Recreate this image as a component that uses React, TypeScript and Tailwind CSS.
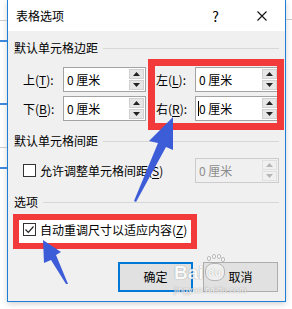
import React from "react";

const font = { fontFamily: '"Noto Sans CJK SC", "Noto Sans", sans-serif' };

function Tri({ up, color }: { up: boolean; color: string }) {
  return (
    <svg width="7" height="4" viewBox="0 0 7 4">
      {up ? <polygon points="0,4 7,4 3.5,0" fill={color} /> : <polygon points="0,0 7,0 3.5,4" fill={color} />}
    </svg>
  );
}

function Spin({ disabled }: { disabled?: boolean }) {
  const c = disabled ? "#b5b5b5" : "#222";
  return (
    <div className="flex flex-col w-[15px] py-px mr-px gap-px">
      <div className={`flex-1 flex items-center justify-center border ${disabled ? "border-[#e0e0e0] bg-[#f0f0f0]" : "border-[#d0d0d0] bg-[#e6e6e6]"}`}>
        <Tri up color={c} />
      </div>
      <div className={`flex-1 flex items-center justify-center border ${disabled ? "border-[#e0e0e0] bg-[#f0f0f0]" : "border-[#d0d0d0] bg-[#e6e6e6]"}`}>
        <Tri up={false} color={c} />
      </div>
    </div>
  );
}

function Field({ w, caret, disabled }: { w: string; caret?: boolean; disabled?: boolean }) {
  return (
    <div
      className={`${w} h-[25px] flex border ${disabled ? "border-[#cccccc] bg-[#f0f0f0] text-[#8d8d8d]" : "border-[#a3a3a3] bg-white text-black"}`}
    >
      <div className="flex-1 flex items-center pl-[3px] relative text-[12px] leading-none">
        {caret && <div className="absolute left-[2px] top-[4px] w-px h-[15px] bg-black" />}
        0 厘米
      </div>
      <Spin disabled={disabled} />
    </div>
  );
}

function Header({ text }: { text: string }) {
  return (
    <div className="flex items-center h-[16px] text-[12px] leading-none text-black">
      <span>{text}</span>
      <div className="flex-1 h-px bg-[#d7d7d7] ml-[5px]" />
    </div>
  );
}

function Label({ c, k, w }: { c: string; k: string; w: string }) {
  return (
    <div className={`${w} text-[12px] leading-none flex items-center`}>
      {c}(<span className="underline underline-offset-2">{k}</span>):
    </div>
  );
}

export default function App() {
  return (
    <div className="w-[292px] h-[309px] bg-white relative overflow-hidden" style={font}>
      {/* background of underlying window */}
      <div className="absolute left-0 top-[20px] w-[7px] h-px bg-[#c9c9c9]" />
      <div className="absolute left-0 top-[40px] w-[7px] h-[2px] bg-[#3c87d8]" />
      <div className="absolute left-0 top-[103px] w-[7px] h-[2px] bg-[#3c87d8]" />
      <div className="absolute left-0 top-[147px] w-[7px] h-px bg-[#c9c9c9]" />
      <div className="absolute left-0 top-[167px] w-[7px] h-[2px] bg-[#3c87d8]" />
      <div className="absolute right-0 top-[19px] w-[6px] h-px bg-[#c9c9c9]" />

      <div className="ml-[7px] w-[279px] h-[302px] border-x border-b border-[#1b7fd6] bg-[#f0f0f0] flex flex-col shadow-[0_2px_6px_rgba(0,0,0,0.18)]">
        {/* title bar */}
        <div className="h-[31px] bg-white flex items-center pl-[8px] text-[12px] text-black">
          <span>表格选项</span>
          <span className="ml-auto mr-[38px] text-[14px] leading-none">?</span>
          <svg width="10" height="10" viewBox="0 0 10 10" className="mr-[18px]">
            <path d="M0.5 0.5 L9.5 9.5 M9.5 0.5 L0.5 9.5" stroke="#111" strokeWidth="1.1" />
          </svg>
        </div>

        <div className="flex-1 flex flex-col px-[6px]">
          <div className="mt-[9px]">
            <Header text="默认单元格边距" />
          </div>
          <div className="mt-[11px] flex flex-col gap-[4px]">
            <div className="flex items-center pl-[9px]">
              <Label c="上" k="T" w="w-[40px]" />
              <Field w="w-[83px]" />
              <div className="w-[10px]" />
              <Label c="左" k="L" w="w-[39px]" />
              <Field w="w-[84px]" />
            </div>
            <div className="flex items-center pl-[9px]">
              <Label c="下" k="B" w="w-[40px]" />
              <Field w="w-[83px]" />
              <div className="w-[10px]" />
              <Label c="右" k="R" w="w-[39px]" />
              <Field w="w-[84px]" caret />
            </div>
          </div>

          <div className="mt-[12px]">
            <Header text="默认单元格间距" />
          </div>
          <div className="mt-[9px] flex items-center pl-[9px]">
            <div className="w-[13px] h-[13px] border border-[#333] bg-white" />
            <span className="ml-[4px] text-[12px] leading-none">
              允许调整单元格间距(<span className="underline underline-offset-2">S</span>)
            </span>
            <div className="ml-auto">
              <Field w="w-[84px]" disabled />
            </div>
          </div>

          <div className="mt-[11px]">
            <Header text="选项" />
          </div>
          <div className="mt-[4px] -ml-px">
            <div className="w-[184px] h-[35px] border-[6px] border-[#f23a3a] bg-white flex items-center pl-[4px] pb-[4px]">
              <div className="w-[13px] h-[13px] border border-[#333] bg-white flex items-center justify-center">
                <svg width="11" height="11" viewBox="0 0 11 11">
                  <path d="M1.5 5.5 L4.3 8.3 L9.5 2.5" stroke="#222" strokeWidth="1.2" fill="none" />
                </svg>
              </div>
              <span className="ml-[4px] text-[12px] leading-none whitespace-nowrap">
                自动重调尺寸以适应内容(<span className="underline underline-offset-2">Z</span>)
              </span>
            </div>
          </div>

          <div className="mt-[13px] flex justify-end gap-[10px] mr-px">
            <div className="w-[75px] h-[30px] border-2 border-[#0078d7] bg-[#e1e1e1] flex items-center justify-center text-[12px]">
              确定
            </div>
            <div className="w-[75px] h-[30px] border border-[#adadad] bg-[#e1e1e1] flex items-center justify-center text-[12px]">
              取消
            </div>
          </div>
        </div>
      </div>

      {/* red annotation box */}
      <div className="absolute left-[148px] top-[59px] w-[136px] h-[71px] border-[7px] border-[#f23a3a]" />

      {/* watermark */}
      <div className="absolute left-[174px] top-[254px] opacity-80 pointer-events-none">
        <div className="flex items-end">
          <span className="text-[19px] font-bold leading-none text-white [text-shadow:0_0_1px_#9a9a9a,0_0_1px_#9a9a9a]" style={{ fontFamily: '"Liberation Sans", sans-serif' }}>
            Bai
          </span>
          <div className="relative w-[20px] h-[28px] ml-[1px]">
            <div className="absolute left-[2px] top-[2px] w-[4px] h-[5px] rounded-full bg-white border border-[#aaa]" />
            <div className="absolute left-[7px] top-0 w-[4px] h-[5px] rounded-full bg-white border border-[#aaa]" />
            <div className="absolute left-[12px] top-0 w-[4px] h-[5px] rounded-full bg-white border border-[#aaa]" />
            <div className="absolute left-[16px] top-[3px] w-[4px] h-[5px] rounded-full bg-white border border-[#aaa]" />
            <div className="absolute left-0 top-[9px] w-[20px] h-[18px] rounded-[8px] bg-white/60 border border-[#aaa] flex items-center justify-center text-[11px] font-bold text-white [text-shadow:0_0_1px_#888]" style={{ fontFamily: '"Liberation Sans", sans-serif' }}>
              du
            </div>
          </div>
        </div>
        <div className="text-[9px] leading-none mt-[4px] text-white [text-shadow:0_0_1px_#999,0_0_1px_#999]" style={{ fontFamily: '"Liberation Sans", sans-serif' }}>
          jingyan.baidu.com
        </div>
      </div>

      {/* arrows */}
      <svg className="absolute left-0 top-0 pointer-events-none" width="292" height="309" viewBox="0 0 292 309">
        <polygon points="173,117 173,150 166,147 136,202 134,201 158,143 149,141" fill="#3d5cd8" />
        <polygon points="43,240 61,252 56,255 68,284 66,284 51,260 44,263" fill="#3d5cd8" />
      </svg>
    </div>
  );
}
